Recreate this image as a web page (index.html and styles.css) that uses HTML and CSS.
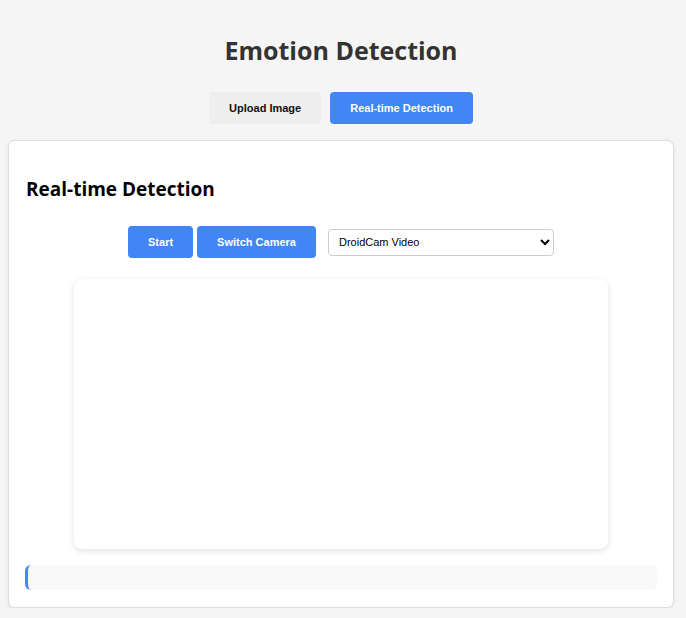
FILE: index.html
```html
<!DOCTYPE html>
<html>
<head>
<meta charset="utf-8">
<link rel="stylesheet" href="styles.css">
</head>
<body>
<div class="page">
  <h1 class="title">Emotion Detection</h1>
  <div class="tabs">
    <button class="tab">Upload Image</button>
    <button class="tab active">Real-time Detection</button>
  </div>
  <div class="card">
    <h2 class="card-title">Real-time Detection</h2>
    <div class="controls">
      <button class="btn">Start</button>
      <button class="btn">Switch Camera</button>
      <select class="camera-select"><option>DroidCam Video</option></select>
    </div>
    <div class="video-box"></div>
    <div class="status"></div>
  </div>
</div>
</body>
</html>
```
FILE: styles.css
```css
html, body {
  margin: 0;
  padding: 0;
  background: #f5f5f5;
}
.page {
  padding: 0 12px 0 8px;
  font-family: "Liberation Sans", Arial, sans-serif;
}
.title {
  margin: 0;
  padding-top: 32px;
  height: 37px;
  line-height: 37px;
  text-align: center;
  font-family: "Open Sans", "Noto Sans", sans-serif;
  font-weight: 700;
  font-size: 25px;
  color: #333333;
}
.tabs {
  display: flex;
  justify-content: center;
  gap: 9px;
  margin-top: 23px;
}
.tab {
  height: 32px;
  padding: 0 20px;
  border: none;
  border-radius: 4px;
  background: #eeeeee;
  color: #111111;
  font-family: "Liberation Sans", Arial, sans-serif;
  font-weight: 700;
  font-size: 11px;
}
.tab.active {
  background: #4285f4;
  color: #ffffff;
}
.card {
  margin-top: 16px;
  background: #ffffff;
  border: 1px solid #dddddd;
  border-radius: 7px;
  box-shadow: 0 1px 4px rgba(0,0,0,0.08);
  padding: 16px 16px 17px 16px;
}
.card-title {
  margin: 19px 0 0 1px;
  height: 27px;
  line-height: 27px;
  font-family: "Open Sans", "Noto Sans", sans-serif;
  font-weight: 700;
  font-size: 19px;
  color: #000000;
}
.controls {
  display: flex;
  justify-content: center;
  align-items: center;
  margin-top: 23px;
  height: 32px;
}
.btn {
  height: 32px;
  padding: 0 20px;
  margin-right: 4px;
  border: none;
  border-radius: 4px;
  background: #4285f4;
  color: #ffffff;
  font-family: "Liberation Sans", Arial, sans-serif;
  font-weight: 700;
  font-size: 11px;
}
.camera-select {
  margin-left: 8px;
  width: 226px;
  height: 27px;
  padding: 0 6px;
  border: 1px solid #cccccc;
  border-radius: 4px;
  background: #ffffff;
  color: #000000;
  font-family: "Liberation Sans", Arial, sans-serif;
  font-size: 11px;
}
.video-box {
  width: 534px;
  height: 270px;
  margin: 21px auto 0;
  background: #ffffff;
  border-radius: 8px;
  box-shadow: 0 2px 6px rgba(0,0,0,0.12);
}
.status {
  margin-top: 16px;
  height: 25px;
  background: #f8f8f8;
  border-left: 3px solid #4285f4;
  border-radius: 6px;
}
```
